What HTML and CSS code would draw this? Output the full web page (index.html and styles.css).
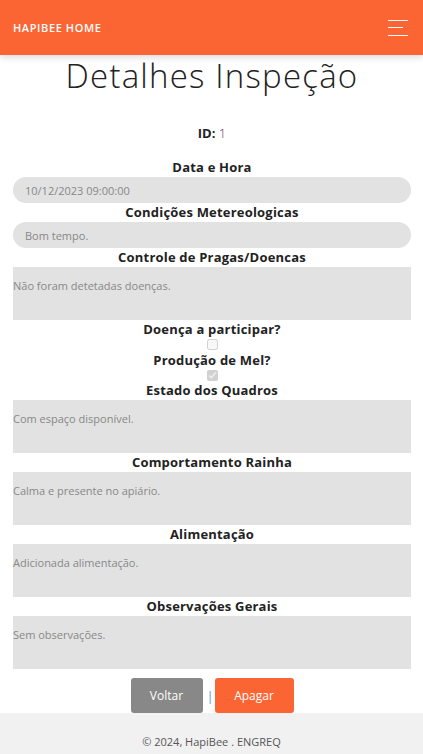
FILE: index.html
```html
<!DOCTYPE html>
<html lang="pt">
<head>
<meta charset="utf-8">
<title>Detalhes Inspeção</title>
<link rel="stylesheet" href="styles.css">
</head>
<body>
<header class="topbar">
  <span class="brand">HAPIBEE HOME</span>
  <button class="burger" aria-label="menu">
    <span class="l1"></span><span class="l2"></span><span class="l3"></span>
  </button>
</header>
<main class="content">
  <h1 class="title">Detalhes Inspeção</h1>
  <p class="idline"><b>ID:</b> <span class="idval">1</span></p>
  <div class="field">
    <label class="lbl">Data e Hora</label>
    <div class="pill">10/12/2023 09:00:00</div>
  </div>
  <div class="field">
    <label class="lbl">Condições Metereologicas</label>
    <div class="pill">Bom tempo.</div>
  </div>
  <div class="field">
    <label class="lbl">Controle de Pragas/Doencas</label>
    <div class="area">Não foram detetadas doenças.</div>
  </div>
  <div class="field">
    <label class="lbl">Doença a participar?</label>
    <input class="chk" type="checkbox" disabled>
  </div>
  <div class="field">
    <label class="lbl">Produção de Mel?</label>
    <input class="chk" type="checkbox" checked disabled>
  </div>
  <div class="field">
    <label class="lbl">Estado dos Quadros</label>
    <div class="area">Com espaço disponível.</div>
  </div>
  <div class="field">
    <label class="lbl">Comportamento Rainha</label>
    <div class="area">Calma e presente no apiário.</div>
  </div>
  <div class="field">
    <label class="lbl">Alimentação</label>
    <div class="area">Adicionada alimentação.</div>
  </div>
  <div class="field">
    <label class="lbl">Observações Gerais</label>
    <div class="area">Sem observações.</div>
  </div>
  <div class="actions">
    <button class="btn grey">Voltar</button>
    <span class="sep">|</span>
    <button class="btn orange">Apagar</button>
  </div>
</main>
<footer class="foot">© 2024, HapiBee . ENGREQ</footer>
</body>
</html>
```
FILE: styles.css
```css
* { box-sizing: border-box; }
html, body { margin: 0; padding: 0; }
body {
  font-family: "Open Sans", "DejaVu Sans", sans-serif;
  color: #222;
  background: #fff;
  width: 423px;
}
.topbar {
  height: 55px;
  background: #fb6533;
  display: flex;
  align-items: center;
  justify-content: space-between;
  padding: 0 15px 0 13px;
  box-shadow: 0 3px 6px rgba(0,0,0,0.12);
  position: relative;
}
.brand {
  color: #fff;
  font-size: 11px;
  font-weight: 600;
  letter-spacing: 0.6px;
}
.burger {
  background: none;
  border: 0;
  padding: 0;
  width: 20px;
  height: 16px;
  display: flex;
  flex-direction: column;
  justify-content: space-between;
  align-items: flex-start;
}
.burger span { display: block; height: 1px; background: #fff; width: 20px; }
.burger .l2 { width: 15px; }
.content {
  display: flex;
  flex-direction: column;
  align-items: center;
  padding: 0 12px 0 13px;
}
.title {
  margin: 2px 0 0;
  font-size: 33px;
  font-weight: 300;
  color: #222;
  line-height: 38px;
  letter-spacing: 1.2px;
}
.idline {
  margin: 30px 0 0;
  font-size: 13px;
  line-height: 16px;
}
.idline b { font-weight: 700; }
.idval { color: #6a2d6a; font-weight: 300; }
.field {
  width: 100%;
  display: flex;
  flex-direction: column;
  align-items: center;
}
.field:first-of-type { margin-top: 17px; }
.lbl {
  font-size: 13px;
  font-weight: 700;
  line-height: 19px;
  color: #222;
  letter-spacing: 0.2px;
}
.pill {
  width: 100%;
  height: 26px;
  background: #e2e2e2;
  border-radius: 13px;
  font-size: 11px;
  color: #888;
  display: flex;
  align-items: center;
  padding-left: 12px;
}
.area {
  width: 100%;
  height: 53px;
  background: #e2e2e2;
  font-size: 11px;
  color: #888;
  padding-top: 11px;
  line-height: 15px;
}
.chk {
  margin: 0 0 0.5px;
  width: 11px;
  height: 11px;
}
.actions {
  display: flex;
  align-items: center;
  margin-top: 9px;
  gap: 4px;
}
.btn {
  border: 0;
  border-radius: 3px;
  height: 35px;
  color: #fff;
  font-family: inherit;
  font-size: 12px;
  font-weight: 500;
}
.grey { background: #888; width: 72px; }
.orange { background: #fb6533; width: 79px; }
.sep { color: #5aa0d0; font-size: 13px; width: 4px; text-align: center; }
.foot {
  background: #f1f1f1;
  height: 41px;
  display: flex;
  align-items: flex-end;
  justify-content: center;
  padding-bottom: 5px;
  font-size: 11px;
  color: #555;
}
```
